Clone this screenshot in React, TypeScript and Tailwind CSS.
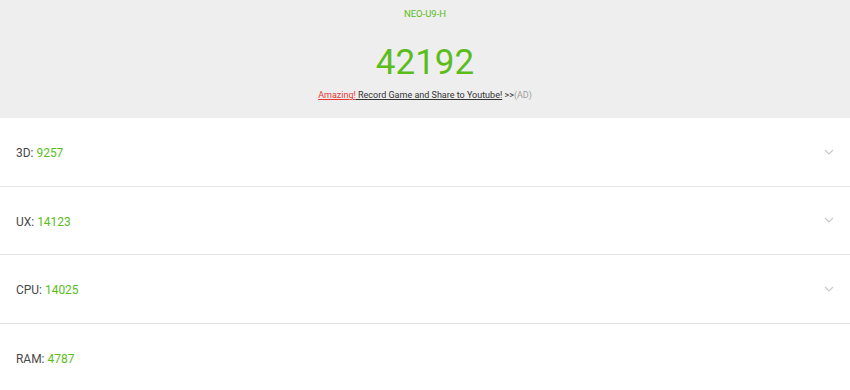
const rows = [
  { label: '3D', value: '9257', chevron: true },
  { label: 'UX', value: '14123', chevron: true },
  { label: 'CPU', value: '14025', chevron: true },
  { label: 'RAM', value: '4787', chevron: false },
];

function Chevron() {
  return (
    <svg width="10" height="6" viewBox="0 0 10 6" className="text-[#c8c8c8]">
      <path d="M1 1 L5 5 L9 1" fill="none" stroke="currentColor" strokeWidth="1.2" />
    </svg>
  );
}

export default function App() {
  return (
    <div className="w-[850px] h-[390px] overflow-hidden bg-white" style={{ fontFamily: 'Roboto, "Liberation Sans", sans-serif' }}>
      <div className="h-[118px] bg-[#eeeeee] flex flex-col items-center">
        <div className="mt-[8px] text-[9.5px] leading-[12px] text-[#5bbd1c]">NEO-U9-H</div>
        <div className="mt-[24px] text-[35px] leading-[38px] text-[#5bbd1c]">42192</div>
        <div className="mt-[7px] text-[9px] leading-[12px] text-[#333]">
          <span className="text-[#e53935] underline">Amazing!</span>
          <span className="underline"> Record Game and Share to Youtube!</span>
          <span> &gt;&gt;</span>
          <span className="text-[#9e9e9e]">(AD)</span>
        </div>
      </div>
      {rows.map((r) => (
        <div key={r.label} className="h-[68.5px] border-b border-[#e4e4e4] flex items-center justify-between pl-[16px] pr-[16px]">
          <div className="text-[13px] text-[#484848] scale-x-[0.92] origin-left translate-y-[1px]">
            {r.label}: <span className="text-[#5bbd1c]">{r.value}</span>
          </div>
          {r.chevron && <Chevron />}
        </div>
      ))}
    </div>
  );
}
